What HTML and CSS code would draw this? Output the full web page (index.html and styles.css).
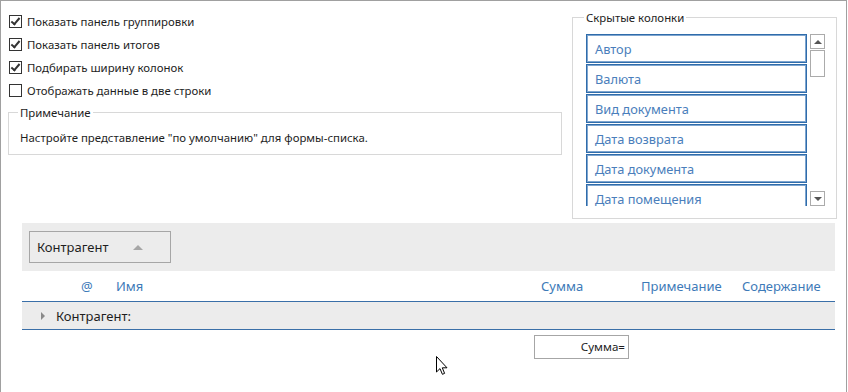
FILE: index.html
```html
<!DOCTYPE html>
<html lang="ru">
<head>
    <meta charset="UTF-8">
    <title>Настройка формы-списка</title>
    <link rel="stylesheet" href="styles.css">
</head>
<body>
    <div class="window">
        <div class="top">
            <div class="left-col">
                <div class="options">
                    <label class="option"><span class="check checked"></span>Показать панель группировки</label>
                    <label class="option"><span class="check checked"></span>Показать панель итогов</label>
                    <label class="option"><span class="check checked"></span>Подбирать ширину колонок</label>
                    <label class="option"><span class="check"></span>Отображать данные в две строки</label>
                </div>
                <fieldset class="group note">
                    <legend>Примечание</legend>
                    <p>Настройте представление "по умолчанию" для формы-списка.</p>
                </fieldset>
            </div>
            <fieldset class="group hidden-cols">
                <legend>Скрытые колонки</legend>
                <div class="list-wrap">
                    <div class="list">
                        <div class="item">Автор</div>
                        <div class="item">Валюта</div>
                        <div class="item">Вид документа</div>
                        <div class="item">Дата возврата</div>
                        <div class="item">Дата документа</div>
                        <div class="item">Дата помещения</div>
                    </div>
                    <div class="scrollbar">
                        <div class="sb-btn"><span class="tri-up"></span></div>
                        <div class="sb-thumb"></div>
                        <div class="sb-space"></div>
                        <div class="sb-btn"><span class="tri-down"></span></div>
                    </div>
                </div>
            </fieldset>
        </div>

        <div class="grid">
            <div class="group-panel">
                <div class="group-btn">Контрагент <span class="sort-up"></span></div>
            </div>
            <div class="row header">
                <div class="cell"></div>
                <div class="cell">@</div>
                <div class="cell">Имя</div>
                <div class="cell">Сумма</div>
                <div class="cell">Примечание</div>
                <div class="cell">Содержание</div>
            </div>
            <div class="group-row">
                <span class="expand"></span>Контрагент:
            </div>
            <div class="row footer">
                <div class="cell"></div>
                <div class="cell"></div>
                <div class="cell"></div>
                <div class="cell"><div class="total">Сумма=</div></div>
                <div class="cell"></div>
                <div class="cell"></div>
            </div>
        </div>

        <svg class="cursor" width="12" height="20" viewBox="0 0 12 20">
            <path d="M0.5 0.5 L0.5 16 L4 12.6 L6.4 18.3 L8.6 17.4 L6.3 11.8 L11 11.8 Z" fill="#fff" stroke="#000" stroke-width="1" stroke-linejoin="round"/>
        </svg>
    </div>
</body>
</html>
```

FILE: styles.css
```css
* {
    box-sizing: border-box;
}
body {
    margin: 0;
    background-color: #fff;
    font-family: "Noto Sans", "Open Sans", sans-serif;
    font-size: 11.4px;
    color: #1e1e1e;
}
.window {
    position: relative;
    width: 847px;
    height: 392px;
    border: 1px solid #a0a0a0;
    border-bottom: none;
    padding: 8px 9px 0 7px;
}
.top {
    display: flex;
    justify-content: space-between;
    height: 210px;
}
.left-col {
    width: 554px;
}
.options {
    display: flex;
    flex-direction: column;
}
.option {
    display: flex;
    align-items: center;
    height: 23px;
    padding-left: 1px;
    padding-top: 1px;
}
.check {
    position: relative;
    width: 13px;
    height: 13px;
    border: 1px solid #333;
    margin-right: 5px;
    background: #fff;
}
.check.checked::after {
    content: "";
    position: absolute;
    left: 3px;
    top: 0px;
    width: 3px;
    height: 7px;
    border: solid #333;
    border-width: 0 2px 2px 0;
    transform: rotate(40deg);
}
.group {
    margin: 0;
    border: 1px solid #d8d8d8;
    min-width: 0;
}
.group legend {
    padding: 0 2px;
    margin-left: -2px;
    line-height: 17px;
    color: #1e1e1e;
}
.note {
    margin-top: 3px;
    padding: 8px 11px 8px 11px;
}
.note p {
    margin: 0;
    line-height: 17px;
}
.hidden-cols {
    width: 265px;
    height: 210px;
    padding: 8px 11px 12px 13px;
}
.list-wrap {
    display: flex;
    gap: 3px;
    height: 172px;
}
.list {
    flex: 1;
    overflow: hidden;
    display: flex;
    flex-direction: column;
    gap: 1px;
}
.item {
    flex: none;
    height: 29px;
    border: 1px solid #2f6cab;
    box-shadow: inset 0 0 0 1px #7ea5cf;
    padding-left: 8px;
    line-height: 29px;
    font-size: 12.8px;
    color: #4a7ebb;
}
.scrollbar {
    width: 15px;
    display: flex;
    flex-direction: column;
    gap: 1px;
}
.sb-btn {
    height: 15px;
    border: 1px solid #ababab;
    display: flex;
    align-items: center;
    justify-content: center;
}
.sb-thumb {
    height: 27px;
    border: 1px solid #ababab;
}
.sb-space {
    flex: 1;
}
.tri-up, .tri-down, .sort-up {
    width: 0;
    height: 0;
    border-left: 4px solid transparent;
    border-right: 4px solid transparent;
}
.tri-up {
    border-bottom: 4px solid #555;
}
.tri-down {
    border-top: 4px solid #555;
}
.grid {
    margin: 4px 2px 0 14px;
}
.group-panel {
    background: #ececec;
    height: 48px;
    padding: 8px 0 0 7px;
}
.group-btn {
    display: flex;
    align-items: center;
    width: 142px;
    height: 32px;
    border: 1px solid #a6a6a6;
    padding-left: 7px;
    font-size: 13px;
    color: #1e1e1e;
}
.sort-up {
    margin-left: 24px;
    border-left-width: 5px;
    border-right-width: 5px;
    border-bottom: 5px solid #a6a6a6;
}
.row {
    display: grid;
    grid-template-columns: 52px 35px 1fr 100px 101px 100px;
}
.header {
    height: 31px;
    border-bottom: 1px solid #3a6fa8;
    color: #3d7ab8;
    font-size: 13px;
    line-height: 30px;
}
.cell {
    padding-left: 7px;
}
.group-row {
    display: flex;
    align-items: center;
    height: 28px;
    background: #ececec;
    border-bottom: 1px solid #3a6fa8;
    padding-left: 19px;
    font-size: 13px;
    color: #1e1e1e;
}
.expand {
    width: 0;
    height: 0;
    border-top: 4px solid transparent;
    border-bottom: 4px solid transparent;
    border-left: 4px solid #8a8a8a;
    margin-right: 11px;
}
.footer {
    padding-top: 5px;
}
.footer .cell {
    padding-left: 0;
}
.total {
    width: 95px;
    height: 24px;
    border: 1px solid #a6a6a6;
    text-align: right;
    padding-right: 3px;
    line-height: 22px;
    font-size: 11.6px;
    color: #1e1e1e;
}
.cursor {
    position: absolute;
    left: 435px;
    top: 355px;
}
```
